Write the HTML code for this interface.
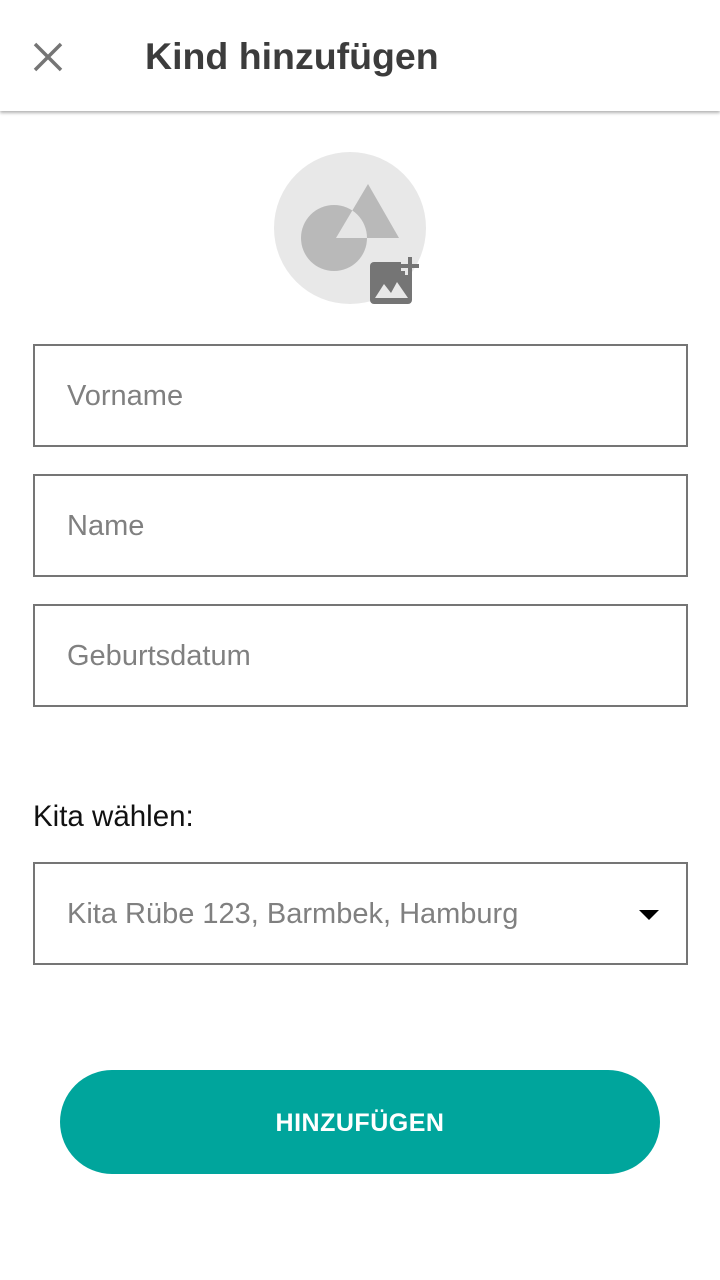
<!DOCTYPE html>
<html><head><meta charset="utf-8"><style>
*{box-sizing:border-box;margin:0;padding:0}
body{width:720px;height:1280px;background:#fff;font-family:"Liberation Sans",sans-serif;position:relative;overflow:hidden}
.hdr{position:absolute;left:0;top:0;width:720px;height:111px;background:#fff;box-shadow:0 2px 3px rgba(0,0,0,.3)}
.title{position:absolute;left:145px;top:35px;font-size:37.5px;font-weight:bold;color:#3c3c3c}
.field{position:absolute;left:33px;width:655px;height:103px;border:2px solid #757575;font-size:29px;color:#808080;padding-left:32px;line-height:101px}
.lbl{position:absolute;left:33px;top:800px;font-size:29.5px;color:#111}
.btn{position:absolute;left:60px;top:1070px;width:600px;height:104px;border-radius:52px;background:#00a59c;color:#fff;font-weight:bold;font-size:25px;text-align:center;line-height:106px;letter-spacing:0.5px}
</style></head><body>
<div class="hdr">
<svg style="position:absolute;left:32px;top:41px" width="32" height="32" viewBox="0 0 32 32"><path d="M3 3L29 29M29 3L3 29" stroke="#757575" stroke-width="3.5"/></svg>
<div class="title">Kind hinzufügen</div>
</div>
<svg style="position:absolute;left:0;top:0" width="720" height="320">
<defs><clipPath id="c"><circle cx="334" cy="238" r="33"/></clipPath><clipPath id="b"><circle cx="350" cy="228" r="76"/></clipPath></defs>
<circle cx="350" cy="228" r="76" fill="#e8e8e8"/>
<circle cx="334" cy="238" r="33" fill="#b9b9b9"/>
<polygon points="368,184 399,238 336,238" fill="#b9b9b9"/>
<polygon points="368,184 399,238 336,238" fill="#e6e6e6" clip-path="url(#c)"/>
<rect x="370" y="262" width="42" height="42" rx="4" fill="#757575"/>
<path d="M410 257V275M401 266H419" stroke="#e8e8e8" stroke-width="10" clip-path="url(#b)"/>
<path d="M410 257V275M401 266H419" stroke="#757575" stroke-width="4"/>
<polygon points="375,298 384,284 391,293 397,282 408,298" fill="#e8e8e8"/>
</svg>
<div class="field" style="top:344px">Vorname</div>
<div class="field" style="top:474px">Name</div>
<div class="field" style="top:604px">Geburtsdatum</div>
<div class="lbl">Kita wählen:</div>
<div class="field" style="top:862px">Kita Rübe 123, Barmbek, Hamburg
<svg style="position:absolute;left:604px;top:46px" width="20" height="11"><polygon points="0,0 20,0 10,10" fill="#000"/></svg></div>
<div class="btn">HINZUFÜGEN</div>
</body></html>
